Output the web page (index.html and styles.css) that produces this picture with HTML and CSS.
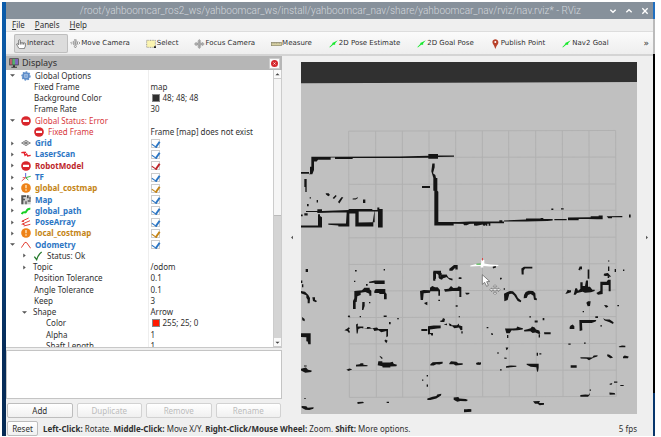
FILE: index.html
```html
<!DOCTYPE html>
<html lang="en">
<head>
<meta charset="utf-8">
<title>nav.rviz* - RViz</title>
<link rel="stylesheet" href="styles.css">
</head>
<body>
<svg width="0" height="0" class="defs" aria-hidden="true">
  <defs>
    <symbol id="arrow" viewBox="0 0 30 30"><path d="M2 25 12 14 11 12 18 9 28 4 20 13 20 17 14 17 5 25Z" fill="#17e82c"/></symbol>
    <symbol id="error" viewBox="0 0 30 30"><circle cx="15" cy="15" r="14.5" fill="#d9262c"/><rect x="6" y="11" width="18" height="7" rx="1" fill="#fff"/></symbol>
    <symbol id="warn" viewBox="0 0 30 30"><circle cx="15" cy="15" r="14.5" fill="#ee8218"/><path d="M13 6h4v10h-4zM13 19h4v4h-4z" fill="#ffe9c4"/></symbol>
    <symbol id="closed" viewBox="0 0 12 12"><path d="M3 1 9 6 3 11Z" fill="#555"/></symbol>
    <symbol id="open" viewBox="0 0 12 12"><path d="M0 3H12L6 9Z" fill="#555"/></symbol>
  </defs>
</svg>
<div class="desktop">
<div class="window">
  <header class="titlebar">
    <h1>/root/yahboomcar_ros2_ws/yahboomcar_ws/install/yahboomcar_nav/share/yahboomcar_nav/rviz/nav.rviz* - RViz</h1>
    <div class="controls">
      <button aria-label="Minimize"><svg viewBox="0 0 12 12"><path d="M2 4 6 8 10 4"/></svg></button>
      <button aria-label="Maximize"><svg viewBox="0 0 12 12"><path d="M2 8 6 4 10 8"/></svg></button>
      <button aria-label="Close"><svg viewBox="0 0 12 12"><path d="M2 2 10 10M10 2 2 10"/></svg></button>
    </div>
  </header>
  <nav class="menubar">
    <button><u>F</u>ile</button><button><u>P</u>anels</button><button><u>H</u>elp</button>
  </nav>
  <div class="toolbar">
    <button class="active"><svg viewBox="0 0 33 30"><path d="M7 26C5 20 2 18 2 15q3-2 6 2V4q3-3 5 0v8q3-2 5 0 3-2 5 0 3-1 5 1v9q-1 3-3 5v2H11Z" fill="#fff" stroke="#444" stroke-width="2"/><path d="M13 12v5M18 12v5M23 12v5" stroke="#444" stroke-width="2"/></svg>Interact</button>
    <button><svg viewBox="0 0 33 30"><g fill="none" stroke="#777" stroke-width="2"><circle cx="16" cy="12" r="7"/><path d="M16 5v14M9 12h14M12 21l4 6 4-6M6 8l-4 4 4 4M26 8l4 4-4 4M12 3l4-2 4 2"/></g></svg>Move Camera</button>
    <button><svg viewBox="0 0 33 30"><rect x="2" y="4" width="26" height="21" fill="#fbf4b0" stroke="#777" stroke-width="2" stroke-dasharray="3 2"/><path d="M24 22h6v5h-6z" fill="#222"/></svg>Select</button>
    <button><svg viewBox="0 0 33 30"><path d="M16 1l5 6h-3v6h7V9l6 6-6 6v-4h-7v6h3l-5 6-5-6h3v-6H7v4l-6-6 6-6v4h7V7h-3Z" fill="#aaa" stroke="#888"/><circle cx="16" cy="15" r="6" fill="none" stroke="#999" stroke-width="2"/></svg>Focus Camera</button>
    <button><svg viewBox="0 0 33 30"><rect x="1" y="10" width="30" height="10" fill="#d6cfa0" stroke="#8a8668" stroke-width="2"/><path d="M6 10v5M11 10v4M16 10v5M21 10v4M26 10v5" stroke="#666"/></svg>Measure</button>
    <button><svg><use href="#arrow"/></svg>2D Pose Estimate</button>
    <button><svg><use href="#arrow"/></svg>2D Goal Pose</button>
    <button><svg viewBox="0 0 33 30"><path d="M16 30Q13 20 9 15 5 7 10 3q6-4 12 0 5 4 2 12-5 5-8 15Z" fill="#b8422c"/><circle cx="16" cy="9" r="3" fill="#fff"/></svg>Publish Point</button>
    <button><svg><use href="#arrow"/></svg>Nav2 Goal</button>
    <button class="more" aria-label="More tools">»</button>
  </div>
  <main class="workspace">
    <section class="displays">
      <header class="dock-title">
        <svg viewBox="0 0 30 30"><path d="M1 1h28v21H1z" fill="#333"/><path d="M3 3h7v17H3z" fill="#b65d70"/><path d="M10 3h8v17h-8z" fill="#58ae70"/><path d="M18 3h9v17h-9z" fill="#7f68bb"/><path d="M12 22h6v4h6v3H7v-3h5z" fill="#333"/></svg>
        <h2>Displays</h2>
        <button aria-label="Close Displays"><svg viewBox="0 0 20 20"><circle cx="10" cy="10" r="10" fill="#d4262c"/><path d="M7 7l6 6M13 7l-6 6" stroke="#fff" stroke-width="2"/></svg></button>
      </header>
      <div class="tree">
        <div class="rows">
        <table>
          <colgroup><col class="names"><col></colgroup>
          <tbody>
          <tr><td><span class="name"><svg class="tw"><use href="#open"/></svg><svg class="ic" viewBox="0 0 30 30"><circle cx="15" cy="15" r="9" fill="#b9d0ec" stroke="#5c8cc8" stroke-width="5"/><circle cx="15" cy="15" r="12" fill="none" stroke="#5c8cc8" stroke-width="4" stroke-dasharray="5 4"/><path d="M15 6v18M6 15h18" stroke="#5c8cc8" stroke-width="2"/></svg>Global Options</span></td><td></td></tr>
          <tr><td><span class="name prop">Fixed Frame</span></td><td>map</td></tr>
          <tr><td><span class="name prop">Background Color</span></td><td><i class="swatch dark"></i>48; 48; 48</td></tr>
          <tr><td><span class="name prop">Frame Rate</span></td><td>30</td></tr>
          <tr class="err"><td><span class="name"><svg class="tw"><use href="#open"/></svg><svg class="ic"><use href="#error"/></svg>Global Status: Error</span></td><td></td></tr>
          <tr class="err"><td><span class="name child"><svg class="ic"><use href="#error"/></svg>Fixed Frame</span></td><td class="plain">Frame [map] does not exist</td></tr>
          <tr class="disp"><td><span class="name"><svg class="tw"><use href="#closed"/></svg><svg class="ic" viewBox="0 0 30 30"><path d="M2 15 15 7 28 15 15 23ZM8 11l13 8M21 11 8 19M2 15h26M15 7v16" fill="none" stroke="#666" stroke-width="2"/></svg>Grid</span></td><td><input type="checkbox" checked aria-label="Grid"></td></tr>
          <tr class="disp"><td><span class="name"><svg class="tw"><use href="#closed"/></svg><svg class="ic" viewBox="0 0 30 30"><path d="M1 11l8-1 3 9 5-4 3 6 9-2M11 9l4 2" fill="none" stroke="#e5202a" stroke-width="4"/></svg>LaserScan</span></td><td><input type="checkbox" checked aria-label="LaserScan"></td></tr>
          <tr class="disp bad"><td><span class="name"><svg class="tw"><use href="#closed"/></svg><svg class="ic"><use href="#error"/></svg>RobotModel</span></td><td><input type="checkbox" checked aria-label="RobotModel"></td></tr>
          <tr class="disp"><td><span class="name"><svg class="tw"><use href="#closed"/></svg><svg class="ic" viewBox="0 0 30 30"><g fill="none" stroke-width="3"><path d="M14 17V3" stroke="#5868dc"/><path d="M14 17 29 13M14 17l8 7" stroke="#38b848"/><path d="M14 17 2 27M5 17l9 0" stroke="#e8555c"/></g></svg>TF</span></td><td><input type="checkbox" checked aria-label="TF"></td></tr>
          <tr class="disp warn"><td><span class="name"><svg class="tw"><use href="#closed"/></svg><svg class="ic"><use href="#warn"/></svg>global_costmap</span></td><td><input type="checkbox" checked aria-label="global_costmap"></td></tr>
          <tr class="disp"><td><span class="name"><svg class="tw"><use href="#closed"/></svg><svg class="ic" viewBox="0 0 30 30"><path d="M1 1h28v27H1z" fill="#ccc"/><path d="M1 1h14v5H7v5h5v5H7v12H1zM18 1h5v9h-5zM25 6h4v8h-4zM13 19h4v9h-4zM20 16h9v4h-9z" fill="#555"/></svg>Map</span></td><td><input type="checkbox" checked aria-label="Map"></td></tr>
          <tr class="disp"><td><span class="name"><svg class="tw"><use href="#closed"/></svg><svg class="ic" viewBox="0 0 30 30"><path d="M2 24q3-6 9-5c8 2 2-12 17-11" fill="none" stroke="#18cf25" stroke-width="6"/></svg>global_path</span></td><td><input type="checkbox" checked aria-label="global_path"></td></tr>
          <tr class="disp"><td><span class="name"><svg class="tw"><use href="#closed"/></svg><svg class="ic" viewBox="0 0 30 30"><path d="M2 13 23 3M2 22 27 11M8 27l20-5M3 13l6 1M5 22l6 1" fill="none" stroke="#e33b36" stroke-width="3"/></svg>PoseArray</span></td><td><input type="checkbox" checked aria-label="PoseArray"></td></tr>
          <tr class="disp warn"><td><span class="name"><svg class="tw"><use href="#closed"/></svg><svg class="ic"><use href="#warn"/></svg>local_costmap</span></td><td><input type="checkbox" checked aria-label="local_costmap"></td></tr>
          <tr class="disp"><td><span class="name"><svg class="tw"><use href="#open"/></svg><svg class="ic" viewBox="0 0 30 30"><path d="M1 23 12 7l5 1 12 17" fill="none" stroke="#e23e32" stroke-width="3"/></svg>Odometry</span></td><td><input type="checkbox" checked aria-label="Odometry"></td></tr>
          <tr><td><span class="name sub"><svg class="tw"><use href="#closed"/></svg><svg class="ic" viewBox="0 0 30 30"><path d="M4 17l7 9Q16 10 26 3" fill="none" stroke="#267a2c" stroke-width="4"/></svg>Status: Ok</span></td><td></td></tr>
          <tr><td><span class="name sub"><svg class="tw"><use href="#closed"/></svg>Topic</span></td><td>/odom</td></tr>
          <tr><td><span class="name prop">Position Tolerance</span></td><td>0.1</td></tr>
          <tr><td><span class="name prop">Angle Tolerance</span></td><td>0.1</td></tr>
          <tr><td><span class="name prop">Keep</span></td><td>3</td></tr>
          <tr><td><span class="name sub"><svg class="tw"><use href="#open"/></svg>Shape</span></td><td>Arrow</td></tr>
          <tr><td><span class="name deep">Color</span></td><td><i class="swatch red"></i>255; 25; 0</td></tr>
          <tr><td><span class="name deep">Alpha</span></td><td>1</td></tr>
          <tr><td><span class="name deep">Shaft Length</span></td><td>1</td></tr>
          </tbody>
        </table>
        </div>
        <div class="scrollbar"><button aria-label="Scroll up"><svg viewBox="0 0 12 12"><path d="M1 8H11L6 3Z"/></svg></button><div class="track"><div class="thumb"></div></div><button aria-label="Scroll down"><svg viewBox="0 0 12 12"><path d="M1 4H11L6 9Z"/></svg></button></div>
      </div>
      <div class="description"></div>
      <div class="actions"><button>Add</button><button disabled>Duplicate</button><button disabled>Remove</button><button disabled>Rename</button></div>
    </section>
    <button class="collapse" aria-label="Hide left dock"><svg viewBox="0 0 12 12"><path d="M9 1 3 6 9 11Z"/></svg></button>
    <svg class="view" viewBox="33 -237 1008 1059" preserveAspectRatio="none" role="img" aria-label="Map view">
      <path d="M33-237H1041V822H33Z" fill="#c0c0c0"/>
      <path d="M33-237H1041V-177L33-173Z" fill="#303030"/>
      <path d="M176-29 178 772M257-29 259 772M337-30 338 772M417-30 419 771M497-30 499 771M577-30 578 770M656-30 658 770M737-31 739 770M817-31 819 770M897-31 899 769M977-31 979 769M176-29 977-31M176 50 977 49M176 131 977 130M176 211 977 209M176 292 977 290M176 372 977 370M177 452 978 449M177 532 978 529M178 611 979 610M178 691 979 690M178 772 979 769" stroke="#b1b1b1" stroke-width="3" fill="none"/>
      <g class="wall">
        <path d="M64 48H122V57H84L80 62H72V88L67 101H57V94H33V99H60V78H64ZM122 48 328 47 415 45V40H444V44L492 44V48L444 49V54H415V51L328 52 188 52V55H135V50H122ZM43 115H50V154H46V139H43ZM396 136H420V142H396ZM427 68h7v12l-5 18 7 5 2 9h4v38l3 3V244h46l79 1v4h-79v6H433V150h-3V112l-6-20z"/>
        <path d="M48 211H82V206H96V211L176 208V205H247V208H262V201H268V205H278V261H264V213H254V245H250V258H196V219H178V258H145V255L115 253V249H168L170 216H129L82 217V214H48ZM206 216V246L248 245 253 213H206ZM84 221H90V226L96 230V261H33V255H84Z"/>
        <path d="M43 218h10v7H43zM33 222h5v5H33zM59 170h4v4h-4zM80 178h4v8h-4zM51 190h5v7h-5zM107 158h9l4 5-5 4-7-5zM128 172l9-9 3 3-8 9zM144 184l10-14h6l-12 19zM188 174l10-1 5-4v4l-6 4h-9zM219 177h7v10h-7zM47 386h7v9h-7zM195 389h5v4h-5zM281 386h4v4h-4z"/>
        <path d="M430 391h23v6l-15 1v16l-8 6zM445 398h7v15h-6zM454 403h17v7l-14 4zM478 385l14-11h11v13h-7v-5l-9 9h-9zM506 411h8v5h-8z"/>
      </g>
      <g class="wall" transform="translate(540 0)">
        <path d="M-50 245 0 243 88 243V239H97V243H102V248H61V256H56V250H52V256H47V252L42 257 38 252 20 256 12 255V249L0 250-10 254H-18L-20 250-50 249ZM102 240 168 237V234H212V232H220V235H248V240L232 241 168 243 102 243ZM253 235H290V239H253ZM294 231 362 230V227H386V225H398V236H382L354 235 326 235V239H294ZM410 227 457 226V230L426 230V233H415ZM477 222h5v9h-5zM244 204h6v4h-6zM273 203h8v4h-8zM68 379l10-5v7l-9 3zM90 412h5v4h-5zM154 384l8-5h25v5h-22l-4 6v12h-6zM325 388l4-10h7v9l-5-1v4zM353 387h5v28h-5zM414 360h4v3h-4zM414 378h4v14h-4zM434 386h4v9h-4zM459 387h4v5h-4zM402 401l13-2 8 9-4 2-3-4-12 1z"/>
      </g>
      <g class="wall" transform="translate(0 390)">
        <path d="M33 30h4v8h-4zM36 42h4v9h-4zM33 62l12 2 10 10 5 9-1 16h-6V88l-4-6v-7l-16-6zM67 81h8v7l6 4-3 4-9-4zM36 140l8 6v7l-7-3zM33 189h29v33h-7l-2-8-4-1V201l-16-1zM42 286h8v3h-8zM33 296l15-4 6 7 11 2-1 5-18 2-13-7zM43 384h4v3h-4zM35 408l14 1 4 4 18-1-1 4-12 4-12-1-11-6zM192 31h4v4h-4zM228 41h5v5h-5zM237 34l18-4h29v11h-30l-1-4-15 1z"/>
        <path d="M189 116V92L193 84V62L216 60 223 52H239V57L244 61V76H238V70L226 65 212 67 212 74 202 78 200 95H197V116ZM253 62l4-6h29v10l4 5v16h-8V71h-13l-2-3h-14zM217 95h7v12l-4 12h-4zM237 95h4v4h-4zM173 137l5-2 3 6h-6zM209 137h4v4h-4zM281 136h9v4h-9zM321 144h6v3h-6zM297 155h5v7h-5zM163 180l9-5 4-4 4 3-4 4 4 7-3 3-5-6zM198 163l6-3-1 9h17v6h11v-5h7l7 4 16-2 4 4h29v22l-5 3v-19l-15 4-9-6-12 2-4-7-20 1-16-3-8 3-2 14h-3zM283 212l4-4 6 4-4 7zM268 257l5 2 6 5-5 2zM198 284l11-2 3-3h8v5l13 1-1 3-34 1zM169 299l9-4 9 2-11 6zM265 273h12v4h23l8-2 3 6 10 3-2 4-18 1v3h-23l-1-4-14-3zM202 396l17-1 3 4-19 3zM290 395h7v4h-7z"/>
        <path d="M430 5h22l4 6-5 5-12-7-3 7v15h-6zM454 13l16 0 6 9 12 3-1 5-9-3-9-8-9 2-4 7-9-3zM507 21h7v4h-7zM390 62l11-3 19 1v-8l7-5 8 4h8l7 8v17h-5V63h-24l-1 4-19 2-2 20h-7zM462 57l14-2 7-8 7 6 12-1 4-4 8 3v29h-6V62h-21l-22 2zM525 67h13v4l-8 2zM402 98l10-4v11l-6-3zM445 88h5v4h-5zM497 105h6v4h-6zM449 152l7-2 3-7 6 3-2 9h-10zM506 138h4v3h-4zM394 176h18v6h-18zM414 168l17-2h21v8l-10 1-22 3v10h9v8h-5l-2-5-8 2zM461 163l10-3v5zM476 159l8 3v3h17l6-5v5l10 3v11l-5 1-5-8-14 2-6-6-8-1zM514 183h4v7h-4z"/>
        <path d="M421 282l7-6 30-1v5l-10 3-9-1-8 4h-10zM478 279l5-6 16 2 6 4h13v5l-21 2-6-4h-13zM558 279l15-3v7h-14zM396 328h4v4h-4zM410 315h4v4h-4zM410 343h4v7h-4zM412 385l16-5 11-2 3-5 12-2-1 5-14 9-18 5h-9zM491 382l14-1 3 4 19 2 7 3-5 4-18-1-9 2-11-6zM522 423l9-1 2-4h11v7l-22 2z"/>
      </g>
      <g class="wall" transform="translate(540 390)">
        <path d="M90 23h4v4h-4zM101 54h4v4h-4zM102 70l10-5 8-3 9 1 10 10 5 10 10 8-2 5-9-4-11-17-6-5-8 1-5 18-10 4zM162 74l5-9 9-4 13 1 7 7 1 13 4 3-1 5-8-2-2-12-8-5-8 3-4 9-9 1zM286 71l4-7 3-6 5 2h5v6l-9 3zM316 54l5 0 3 7 7-5V36h7v11h7l3-17h6v19h6l7 9h7v4l-11 4-18 1-7-3-17 4-4 5h-6zM342 54h8v8h-8zM379 68l12-7v-27h19l4-6h8v35h-6V44h-18v27l-14 2zM402 10l12-2 4 15h-5v-9l-12 1zM349 97l5-4h8l-2 14-7 1zM338 122h4v4h-4zM402 104l9 1 4 4-7 3zM442 104h5v4h-5zM178 138h5v4h-5zM218 143h5v7h-5zM194 151h9v6h-9zM299 170l3-4 6-3 5 5v8h-14zM328 149h42l9 0-2 5-12 4h-29l1 22-8 2zM376 138h8v5h-8zM399 144l8 4h12l12 8-2 5-12-6-13-4zM391 165h5v4h-5z"/>
        <path d="M105 175h24l10-1 3-5 8 3 9 2-1 4-15 2-13 1-5-1-6 9h-10zM111 194h4v9h-4zM162 179l10-2 10-3 4-5 8 3 4 6 10 3 3 9-4 1-11-4-8 1-7-5-18 1zM206 192h4v10h-4zM222 186h20v6h-19zM50 170h5v4h-5zM63 189l6 1v4l-6-1zM107 232h8l-2 5-4 3zM82 246h4v5h-4zM103 262l7 1v3h-7zM200 248h4v9h-4zM208 249h6v4h-6zM295 220h7v4h-7zM342 217h5v4h-5zM446 229l10-3 10 1v4h-18zM19 278l7-2 5 3-1 5-9-1zM90 297h5v4h-5zM108 288l15-2 16 1v3l-31 3zM170 281h36v12l-2 12-3-1-2-13-17-1-12-6zM302 285h18v8h-18zM331 261l14 0 22 1 4-6 12-1-1 4-12 4-13 7-7-4-18-1zM411 253l6 0 8 5 4 5-8 1-9-6zM459 260l5-4 12 3-2 5h-15zM419 341l8-2-2 5h-6zM432 334h10v4h-10zM451 345h10v3h-10zM331 375l15-2 10 1 3-5v6l-5 5h-23zM359 358h4v4h-4zM418 367l16 2 2 4-17 1zM189 394l21-1-3 6h15v5l-13 2-6-5-8 0zM-18 418h20v6h-20z"/>
      </g>
      <path d="M541 375l18-4 14 1 1-13h9v10l18 3 24 2v3l-25 1-20-1v4h-8v-4l-31 1z" fill="#fff"/>
      <path d="M559 370l13-1v4h-13z" fill="#48b848"/><path d="M576 353h3v7h-3z" fill="#e04848"/>
      <path d="M577 403V432L584 426 590 438 595 435 590 424 599 423Z" fill="#fff" stroke="#555" stroke-width="2"/>
      <path d="M615 433l5 5h-3v8h8v-3l6 5-6 6v-4h-8v8h3l-5 5-5-5h3v-8h-8v4l-6-6 6-5v3h8v-8h-3Z" fill="#fff" stroke="#666" stroke-width="2"/>
    </svg>
    <button class="collapse right" aria-label="Hide right dock"><svg viewBox="0 0 12 12"><path d="M3 1 9 6 3 11Z"/></svg></button>
  </main>
  <footer class="status">
    <button>Reset</button>
    <p><b>Left-Click:</b> Rotate. <b>Middle-Click:</b> Move X/Y. <b>Right-Click/Mouse Wheel:</b> Zoom. <b>Shift:</b> More options.</p>
    <output>5 fps</output>
  </footer>
</div>
</div>
</body>
</html>
```
FILE: styles.css
```css
* { box-sizing: border-box; }
body { margin: 0; padding: 2px 6px 1px 2px; background: #fff; color: #303030; font: 8px/10px "Noto Sans", sans-serif; }
.defs { position: absolute; }
h1, h2, p { margin: 0; font-weight: 400; }
button { font: inherit; color: inherit; border: 0; padding: 0; background: none; }
svg { display: block; flex: none; }

.desktop {
  height: calc(100vh - 3px);
  padding: 0 2px 0 4px;
  background:
    linear-gradient(#1f6fc0 0 4%, #bbb 4% 12%, #000 12% 90%, #07366c 90%) right / 2px 100% no-repeat,
    linear-gradient(#0b5cab, #094a8c 45%, #062c59 80%, #052a55);
}
.window {
  height: 100%;
  display: flex;
  flex-direction: column;
  background: #efefef;
}

.titlebar {
  height: 17px;
  display: flex;
  align-items: center;
  background: #87919b;
  color: #d3d7db;
}
.titlebar h1 { flex: 1; padding-right: 28px; text-align: right; white-space: nowrap; font: 300 10px/16px Roboto, sans-serif; }
.controls { display: flex; gap: 8px; padding-right: 4px; }
.controls svg { width: 8px; height: 8px; fill: none; stroke: #fff; stroke-width: 2; }

.menubar { height: 12px; display: flex; gap: 10px; padding-left: 6px; align-items: center; }

.toolbar {
  height: 25px;
  display: flex;
  align-items: center;
  padding: 2px 4px 1px 8px;
  border-top: 1px solid #ddd;
  border-bottom: 2px solid #d4d4d4;
  background: linear-gradient(#fbfbfb, #eee);
  font: 7px/9px "DejaVu Sans", sans-serif;
}
.toolbar button {
  display: flex;
  align-items: center;
  height: 19px;
  padding: 0 14px 0 2px;
  white-space: nowrap;
}
.toolbar svg { width: 11px; height: 10px; }
.toolbar .active { background: #dcdcdc; border-radius: 2px; box-shadow: inset 0 0 0 1px #bebebe; }
.toolbar .more { margin-left: auto; padding: 0; font-size: 9px; }

.workspace { flex: 1; min-height: 0; display: flex; }
.displays { flex: 0 0 276px; display: flex; flex-direction: column; }
.dock-title {
  height: 14px;
  display: flex;
  align-items: center;
  gap: 3px;
  padding: 0 2px 0 3px;
  background: #b6b6b6;
}
.dock-title h2 { flex: 1; font-size: 9px; }
.dock-title > svg { width: 10px; height: 10px; }
.dock-title button { padding: 1px; background: #fafafa; border: 1px solid #ccc; border-radius: 1px; }
.dock-title button svg { width: 7px; height: 7px; }

.tree {
  flex: 1;
  min-height: 0;
  display: flex;
  overflow: hidden;
  background: #fff;
  border-bottom: 1px solid #c8c8c8;
}
.rows { flex: 1; overflow: hidden; }
table { width: 100%; height: 282px; border-collapse: collapse; table-layout: fixed; }
.names { width: 142px; }
td { padding: 0; border-right: 1px solid #eee; vertical-align: middle; white-space: nowrap; line-height: 10px; }
td + td { padding-left: 2px; border: 0; }
.name { display: flex; align-items: center; height: 10px; padding-left: 4px; }
.sub { padding-left: 16px; }
.prop { padding-left: 28px; }
.child { padding-left: 28px; }
.deep { padding-left: 40px; }
.tw { width: 5px; height: 5px; margin-right: 6px; }
.ic { width: 10px; height: 10px; margin-right: 4px; }
.err { color: #d8383d; }
.plain { color: #303030; }
.disp { color: #2c76c4; font-weight: 700; }
.bad { color: #bd262b; }
.warn { color: #c48415; }
input {
  appearance: none;
  display: block;
  width: 9px;
  height: 9px;
  margin: 0;
  border: 1px solid #ccc;
  color: inherit;
  background: #fff;
}
input:checked::before {
  content: "";
  display: block;
  width: 4px;
  height: 6px;
  margin-left: 1px;
  border: solid currentColor;
  border-width: 0 2px 1px 0;
  transform: rotate(35deg);
}
.swatch { display: inline-block; width: 8px; height: 8px; margin: 0 3px 0 1px; vertical-align: -1px; border: 1px solid #888; }
.dark { background: #303030; }
.red { background: #ff1900; }

.scrollbar { flex: 0 0 9px; display: flex; flex-direction: column; border: solid #ccc; border-width: 0 1px; background: #d4d4d4; }
.scrollbar button { height: 9px; display: flex; align-items: center; justify-content: center; background: #fafafa; border: solid #ccc; border-width: 0 0 1px; }
.scrollbar svg { width: 5px; height: 5px; fill: #444; }
.track { flex: 1; }
.thumb { height: 53%; background: #f5f5f5; border-bottom: 1px solid #bbb; }

.description { height: 49px; margin-top: 2px; background: #fff; border: 1px solid #c4c4c4; }
.actions { display: flex; gap: 4px; padding: 4px 1px 0; }
.actions button, .status button {
  flex: 1;
  height: 15px;
  border: 1px solid #bdbdbd;
  border-radius: 2px;
  background: linear-gradient(#fff, #f0f0f0);
}
.actions button:disabled { color: #bcbcbc; border-color: #d2d2d2; }

.collapse { flex: 0 0 19px; display: flex; align-items: center; justify-content: center; }
.right { flex-basis: 16px; padding-left: 4px; }
.collapse svg { width: 4px; height: 5px; fill: #555; }
.view { flex: 1; min-width: 0; height: auto; margin: 6px 0 4px; }
.wall { fill: #141414; }

.status { display: flex; align-items: center; gap: 5px; height: 18px; padding: 3px 16px 0 1px; }
.status button { flex: 0 0 31px; }
.status p { flex: 1; white-space: nowrap; }
.status b { font-weight: 700; }
```
